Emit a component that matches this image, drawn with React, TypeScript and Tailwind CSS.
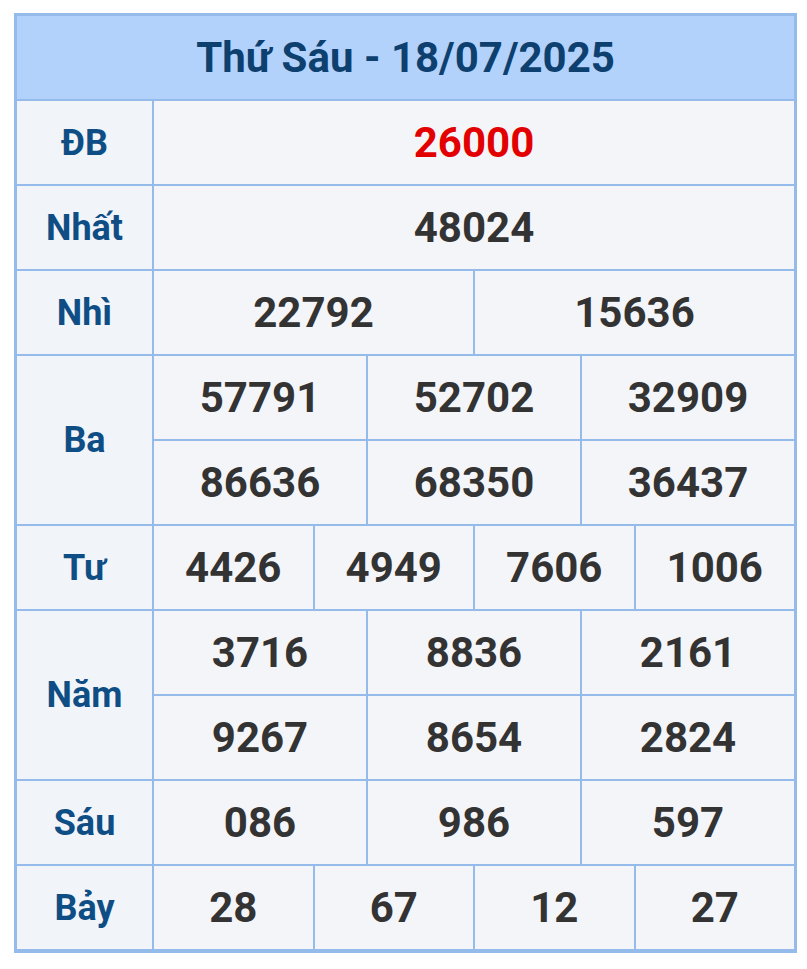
const rows: { label: string; groups: string[][] }[] = [
  { label: 'ĐB', groups: [['26000']] },
  { label: 'Nhất', groups: [['48024']] },
  { label: 'Nhì', groups: [['22792', '15636']] },
  { label: 'Ba', groups: [['57791', '52702', '32909'], ['86636', '68350', '36437']] },
  { label: 'Tư', groups: [['4426', '4949', '7606', '1006']] },
  { label: 'Năm', groups: [['3716', '8836', '2161'], ['9267', '8654', '2824']] },
  { label: 'Sáu', groups: [['086', '986', '597']] },
  { label: 'Bảy', groups: [['28', '67', '12', '27']] },
]

const spanClass: Record<number, string> = {
  1: 'col-span-12',
  2: 'col-span-6',
  3: 'col-span-4',
  4: 'col-span-3',
}

export default function App() {
  return (
    <div className="min-h-screen bg-white pl-[14px] pt-[13px]" style={{ fontFamily: 'Roboto, "Noto Sans", sans-serif' }}>
      <div className="grid w-[783px] grid-cols-[135px_repeat(12,1fr)] gap-[2px] border-[3px] border-b-[4px] border-[#94bbea] bg-[#94bbea]">
        <div className="col-span-13 flex h-[83px] items-center justify-center bg-[#b3d2fb] text-[42px] font-bold text-[#0d406f]">
          Thứ Sáu - 18/07/2025
        </div>
        {rows.map((row) => (
          <>
            <div
              key={row.label}
              className={`flex items-center justify-center bg-[#f1f5fa] text-[36px] font-bold text-[#0f4e85] ${
                row.groups.length === 2 ? 'row-span-2' : 'h-[83px]'
              }`}
            >
              {row.label}
            </div>
            {row.groups.map((g, gi) =>
              g.map((n, i) => (
                <div
                  key={`${row.label}-${gi}-${i}`}
                  className={`flex h-[83px] items-center justify-center bg-[#f3f5f9] text-[42px] font-bold ${spanClass[g.length]} ${
                    row.label === 'ĐB' ? 'text-[#e30000]' : 'text-[#333333]'
                  } ${gi === 1 && i === 0 ? 'col-start-2' : ''}`}
                >
                  {n}
                </div>
              ))
            )}
          </>
        ))}
      </div>
    </div>
  )
}
